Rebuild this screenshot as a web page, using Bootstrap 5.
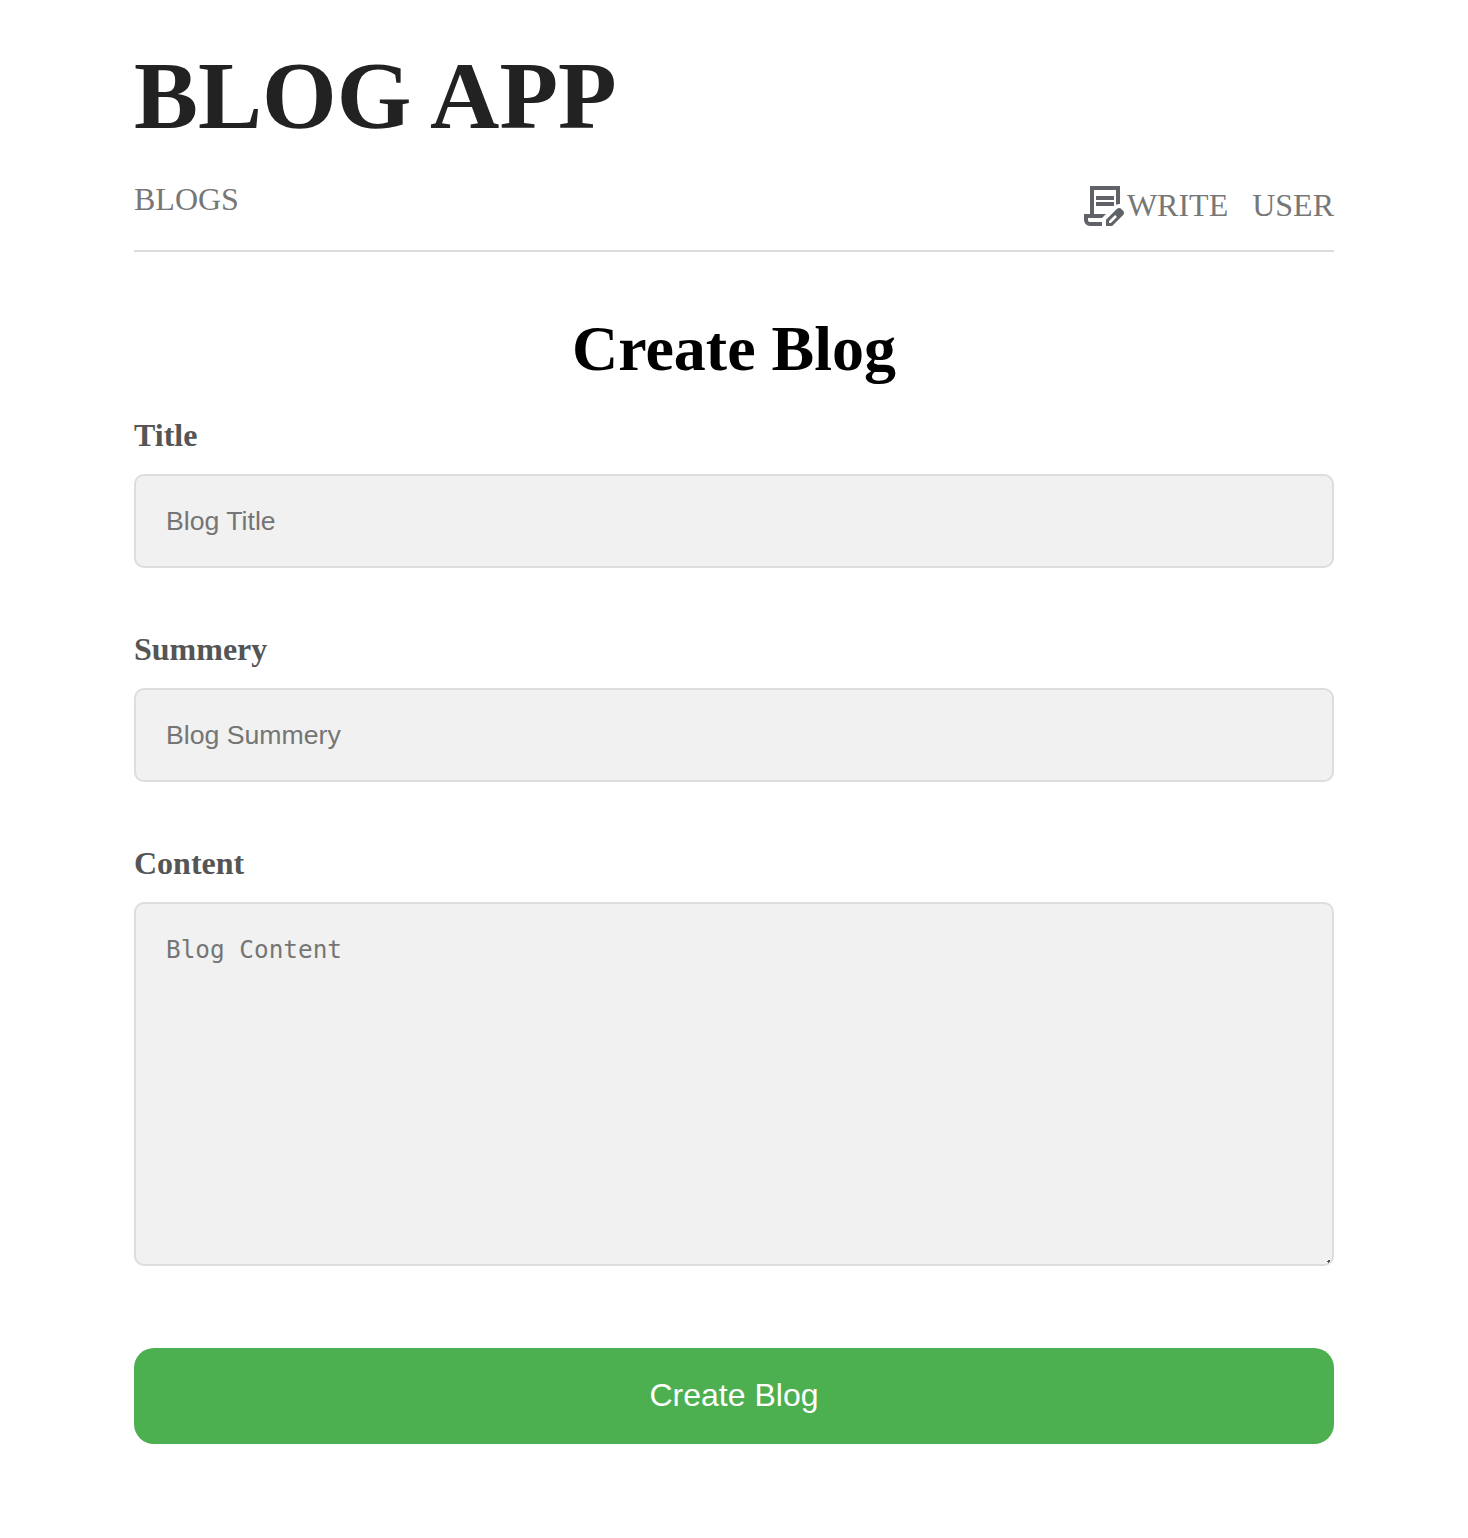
<!DOCTYPE html>
<html lang="en">
<head>
<meta charset="utf-8">
<meta name="viewport" content="width=device-width, initial-scale=1">
<title>Blog App</title>
<link href="https://cdn.jsdelivr.net/npm/bootstrap@5.3.0/dist/css/bootstrap.min.css" rel="stylesheet">
<style>
  body { font-family: "Liberation Serif", "Times New Roman", serif; color: #000; background: #fff; }
  .page { width: 1200px; padding-top: 41px; }
  .brand { font-size: 96px; line-height: 110px; color: #222; }
  .topnav { height: 71px; margin-top: 30px; border-bottom: 2px solid #ddd; font-size: 32px; line-height: 36px; }
  .topnav a { color: #777; }
  .topnav .actions { gap: 24px; padding-top: 6px; height: 45px; }
  .topnav .actions svg { width: 40px; height: 40px; margin: -1px 3.300px 0 0; fill: #5f6368; }
  .form-heading { font-size: 64px; line-height: 74px; margin: 60px 0 31px; }
  .blog-form .form-label { font-size: 32px; line-height: 36px; margin-bottom: 21px; color: #555; }
  .blog-form .form-control { padding: 30px; border: 2px solid #ddd; border-radius: 10px; background: #f1f1f1; font-family: "Liberation Sans", Arial, sans-serif; font-size: 26.67px; line-height: 30px; }
  .blog-form .form-control::placeholder { color: #757575; }
  .blog-form .field { margin-bottom: 63px; }
  .blog-form textarea.form-control { height: 364px; padding-top: 31px; resize: none; font-family: "DejaVu Sans Mono", monospace; font-size: 24.36px; }
  .grip { right: 4px; bottom: 3px; width: 3px; height: 3px; }
  .btn-create { height: 96px; margin-top: 82px; padding: 0 0 2px; border: 0; border-radius: 20px; background: #4caf50; color: #fff; font-family: "Liberation Sans", Arial, sans-serif; font-size: 32px; line-height: 36px; }
</style>
<script src="https://cdn.jsdelivr.net/npm/bootstrap@5.3.0/dist/js/bootstrap.bundle.min.js"></script>
</head>
<body>
<div class="page mx-auto">
  <header>
    <h1 class="brand fw-bold m-0">BLOG APP</h1>
    <nav class="topnav d-flex justify-content-between align-items-start">
      <a class="text-decoration-none" href="#">BLOGS</a>
      <div class="actions d-flex">
        <a class="d-flex text-decoration-none" href="#">
          <svg viewBox="120 -880 800 800" aria-hidden="true"><path d="M240-80q-50 0-85-35t-35-85v-120h120v-560h600v361q-20-2-40.500 1.500T760-505v-295H320v480h240l-80 80H200v40q0 17 11.500 28.500T240-160h240v80H240Zm320 0v-123l221-220q9-9 20-13t22-4q12 0 23 4.500t20 13.500l37 37q8 9 12.500 20t4.500 22q0 11-4 22.500T903-300L683-80H560Zm60-60h38l121-122-18-19-19-18-122 121v38ZM360-600v-80h360v80H360Zm0 120v-80h360v80H360Z"/></svg>
          WRITE</a>
        <a class="text-decoration-none" href="#">USER</a>
      </div>
    </nav>
  </header>
  <main>
    <h2 class="form-heading fw-bold text-center">Create Blog</h2>
    <form class="blog-form">
      <div class="field">
        <label class="form-label d-block fw-bold" for="title">Title</label>
        <input class="form-control" id="title" type="text" placeholder="Blog Title">
      </div>
      <div class="field">
        <label class="form-label d-block fw-bold" for="summary">Summery</label>
        <input class="form-control" id="summary" type="text" placeholder="Blog Summery">
      </div>
      <div>
        <label class="form-label d-block fw-bold" for="content">Content</label>
        <div class="position-relative">
          <textarea class="form-control d-block" id="content" placeholder="Blog Content"></textarea>
          <svg class="grip position-absolute" viewBox="0 0 3 3" aria-hidden="true"><path d="M1 0h2v2H2v1H1V2H0V1h1Z" fill="#555"/></svg>
        </div>
      </div>
      <button class="btn btn-create w-100" type="button">Create Blog</button>
    </form>
  </main>
</div>
</body>
</html>
